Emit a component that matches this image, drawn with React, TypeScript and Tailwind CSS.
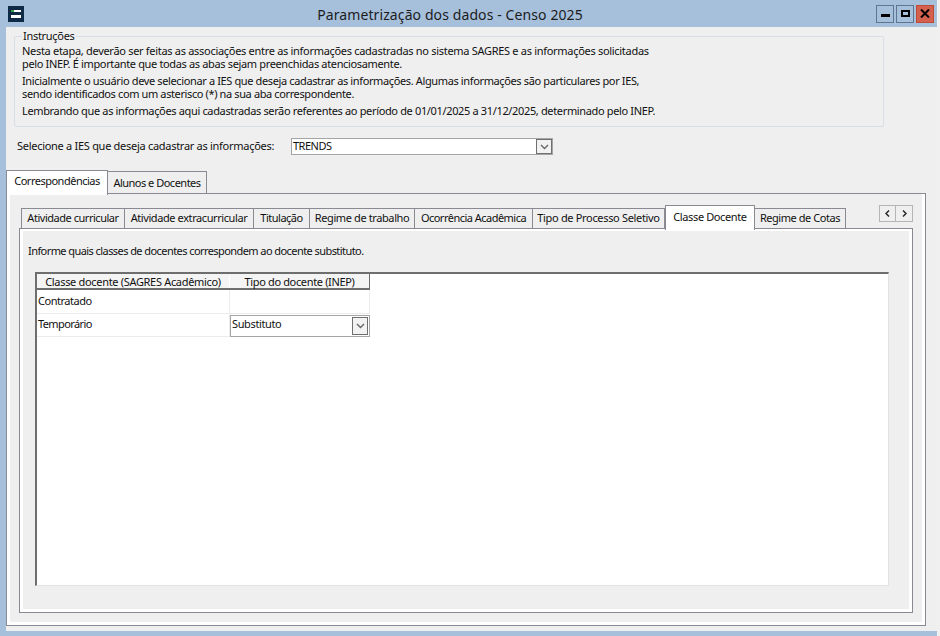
const innerTabs = [
  { label: 'Atividade curricular', w: 'w-[104px]', t: 'tracking-[-0.47px]' },
  { label: 'Atividade extracurricular', w: 'w-[129px]', t: 'tracking-[-0.41px]' },
  { label: 'Titulação', w: 'w-[56px]', t: 'tracking-[-0.5px]' },
  { label: 'Regime de trabalho', w: 'w-[105px]', t: 'tracking-[-0.39px]' },
  { label: 'Ocorrência Acadêmica', w: 'w-[118px]', t: 'tracking-[-0.52px]' },
  { label: 'Tipo de Processo Seletivo', w: 'w-[132px]', t: 'tracking-[-0.33px]' },
  { label: 'Classe Docente', w: 'w-[90px]', t: 'tracking-[-0.38px]', active: true },
  { label: 'Regime de Cotas', w: 'w-[91px]', t: 'tracking-[-0.44px]' },
]

function Chevron() {
  return (
    <svg width="9" height="6" viewBox="0 0 9 6" className="text-[#666]">
      <path d="M1 1l3.5 3.5L8 1" fill="none" stroke="currentColor" strokeWidth="1.4" />
    </svg>
  )
}

function ComboArrow({ className }: { className: string }) {
  return (
    <div className={`flex items-center justify-center border border-[#6f6f6f] bg-[#f2f2f2] ${className}`}>
      <Chevron />
    </div>
  )
}

function WinButton({ children, close }: { children: React.ReactNode; close?: boolean }) {
  return (
    <div className={`flex h-[18px] w-[18px] items-center justify-center border ${close ? 'border-[#c04a38] bg-[#d4604e]' : 'border-[#5f7691]'}`}>
      {children}
    </div>
  )
}

export default function App() {
  return (
    <div className="h-[636px] w-[940px] overflow-hidden bg-[#f0f0f0] text-[11px] leading-[13px] text-[#111] font-['Noto_Sans','Liberation_Sans',sans-serif]">
      <div className="flex h-full w-[937px] flex-col bg-[#a6c0dc] pb-[5px] pl-[6px]">
        {/* title bar */}
        <div className="flex h-[27px] shrink-0 items-center pr-[3px]">
          <svg width="16" height="16" viewBox="0 0 16 16" className="ml-[2px] shrink-0">
            <rect width="16" height="16" fill="#0f2a47" />
            <rect x="3" y="4" width="10" height="2" fill="#fff" />
            <rect x="3" y="4" width="3" height="2" fill="#2f9e44" />
            <rect x="3" y="9" width="10" height="3" fill="#fff" />
          </svg>
          <div className="mt-[3px] flex-1 text-center text-[14px] leading-[18px] tracking-[0.1px] text-[#1c1c1c]">Parametrização dos dados - Censo 2025</div>
          <div className="flex gap-[2px]">
            <WinButton>
              <div className="mt-[4px] h-[3px] w-[9px] bg-black" />
            </WinButton>
            <WinButton>
              <div className="h-[7px] w-[9px] border-2 border-black" />
            </WinButton>
            <WinButton close>
              <svg width="10" height="9" viewBox="0 0 10 9">
                <path d="M1 .5l8 8M9 .5l-8 8" stroke="#000" strokeWidth="2" />
              </svg>
            </WinButton>
          </div>
        </div>

        {/* client area */}
        <div className="flex min-h-0 flex-1 flex-col bg-[#efefef] pr-[11px]">
          <div className="relative ml-[8px] mt-[9px] h-[91px] w-[870px] shrink-0 rounded-[2px] border border-[#d9dee6] pl-[7px] pt-[7px]">
            <span className="absolute left-[7px] top-[-8px] bg-[#efefef] px-[1px] tracking-[-0.3px]">Instruções</span>
            <p className="tracking-[-0.3px]">Nesta etapa, deverão ser feitas as associações entre as informações cadastradas no sistema SAGRES e as informações solicitadas</p>
            <p className="tracking-[-0.35px]">pelo INEP. É importante que todas as abas sejam preenchidas atenciosamente.</p>
            <p className="mt-[4px] tracking-[-0.37px]">Inicialmente o usuário deve selecionar a IES que deseja cadastrar as informações. Algumas informações são particulares por IES,</p>
            <p className="tracking-[-0.38px]">sendo identificados com um asterisco (*) na sua aba correspondente.</p>
            <p className="mt-[4px] tracking-[-0.35px]">Lembrando que as informações aqui cadastradas serão referentes ao período de 01/01/2025 a 31/12/2025, determinado pelo INEP.</p>
          </div>

          <div className="ml-[11px] mt-[11px] flex h-[17px] shrink-0 items-center">
            <span className="mb-[2px] w-[274px] tracking-[-0.285px]">Selecione a IES que deseja cadastrar as informações:</span>
            <div className="flex h-[17px] w-[262px] items-center justify-between border border-[#a5a5a5] bg-white pl-[1px]">
              <span className="mb-[2px] tracking-[-0.5px]">TRENDS</span>
              <ComboArrow className="h-[15px] w-[16px]" />
            </div>
          </div>

          {/* outer tabs */}
          <div className="mt-[15px] flex h-[23px] shrink-0 items-end tracking-[-0.5px]">
            <div className="z-10 mb-[-2px] flex h-[25px] w-[102px] items-center justify-center border border-b-0 border-[#8a8a92] bg-white pb-[5px]">Correspondências</div>
            <div className="flex h-[22px] w-[99px] items-center justify-center border border-b-0 border-l-0 border-[#8a8a92]">Alunos e Docentes</div>
          </div>

          <div className="mb-[5px] flex min-h-0 flex-1 flex-col border border-[#8a8a92] bg-white pb-[3px] pl-[3px] pr-[3px]">
            <div className="flex min-h-0 flex-1 flex-col bg-[#efefef] pb-[9px] pl-[9px] pr-[9px]">
              {/* inner tabs */}
              <div className="flex h-[34px] shrink-0 items-end justify-between">
                <div className="ml-[2px] flex items-end">
                  {innerTabs.map(t =>
                    t.active ? (
                      <div key={t.label} className={`z-10 mb-[-2px] flex h-[25px] items-center justify-center border border-b-0 border-[#8a8a92] bg-white pb-[4px] ${t.w} ${t.t}`}>{t.label}</div>
                    ) : (
                      <div key={t.label} className={`flex h-[20px] items-center justify-center border border-b-0 border-l-0 border-[#8a8a92] pb-[2px] first:border-l ${t.w} ${t.t}`}>{t.label}</div>
                    )
                  )}
                </div>
                <div className="mb-[6px] flex">
                  <div className="flex h-[17px] w-[17px] items-center justify-center border border-[#b5b5b5] text-[#222]">
                    <svg width="5" height="7" viewBox="0 0 5 7"><path d="M4 .5L1 3.5l3 3" fill="none" stroke="currentColor" strokeWidth="1.4" /></svg>
                  </div>
                  <div className="flex h-[17px] w-[17px] items-center justify-center border border-l-0 border-[#b5b5b5] text-[#222]">
                    <svg width="5" height="7" viewBox="0 0 5 7"><path d="M1 .5l3 3-3 3" fill="none" stroke="currentColor" strokeWidth="1.4" /></svg>
                  </div>
                </div>
              </div>

              <div className="flex min-h-0 flex-1 flex-col border border-[#8a8a92] bg-white pb-[3px] pl-[3px] pr-[3px] pt-[2px]">
                <div className="flex min-h-0 flex-1 flex-col bg-[#efefef] pb-[23px] pl-[12px] pr-[20px] pt-[13px]">
                  <p className="ml-[-7px] h-[14px] shrink-0 tracking-[-0.57px]">Informe quais classes de docentes correspondem ao docente substituto.</p>

                  {/* grid */}
                  <div className="mt-[14px] min-h-0 flex-1 border-b border-l-2 border-r border-t-2 border-b-[#e2e2e2] border-l-[#6e6e6e] border-r-[#e2e2e2] border-t-[#6e6e6e] bg-white">
                    <div className="flex h-[16px] w-[333px] border-b-2 border-r border-b-[#6e6e6e] border-r-[#6e6e6e] bg-[#f4f4f4] pt-[1px]">
                      <div className="w-[193px] border-r border-[#fff] text-center tracking-[-0.32px]">Classe docente (SAGRES Acadêmico)</div>
                      <div className="flex-1 text-center tracking-[-0.35px]">Tipo do docente (INEP)</div>
                    </div>
                    <div className="flex h-[24px] w-[333px] border-b border-[#ececec]">
                      <div className="w-[193px] border-r border-[#ececec] pl-[1px] pt-[4px] tracking-[-0.47px]">Contratado</div>
                      <div className="flex-1 border-r border-[#ececec]" />
                    </div>
                    <div className="flex h-[23px] w-[333px] border-b border-[#ececec]">
                      <div className="w-[193px] border-r border-[#ececec] pl-[1px] pt-[3px] tracking-[-0.6px]">Temporário</div>
                      <div className="mt-[1px] flex h-[22px] flex-1 items-center justify-between border border-[#a5a5a5] pl-[1px] pr-[1px]">
                        <span className="mb-[6px] tracking-[-0.37px]">Substituto</span>
                        <ComboArrow className="h-[18px] w-[16px]" />
                      </div>
                    </div>
                  </div>
                </div>
              </div>
            </div>
          </div>
        </div>
      </div>
    </div>
  )
}
